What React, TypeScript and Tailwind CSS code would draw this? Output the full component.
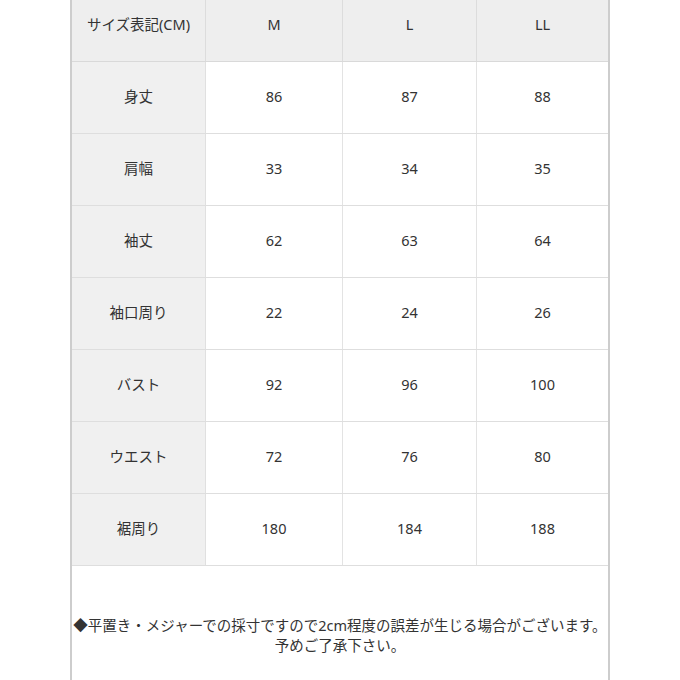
const rows = [
  { label: "身丈", values: ["86", "87", "88"] },
  { label: "肩幅", values: ["33", "34", "35"] },
  { label: "袖丈", values: ["62", "63", "64"] },
  { label: "袖口周り", values: ["22", "24", "26"] },
  { label: "バスト", values: ["92", "96", "100"] },
  { label: "ウエスト", values: ["72", "76", "80"] },
  { label: "裾周り", values: ["180", "184", "188"] },
];

const sizes = ["M", "L", "LL"];

const gridCols = "grid grid-cols-[134px_137px_134px_1fr]";

export default function App() {
  return (
    <main
      className="min-h-[680px] bg-white text-[#333333]"
      style={{ fontFamily: '"Noto Sans", "Noto Sans CJK JP", sans-serif' }}
    >
      <div className="mx-auto min-h-[680px] w-[540px] border-x-2 border-[#cdcdcd]">
        {/* header */}
        <div className={`${gridCols} h-[62px] border-b border-[#d9d9d9] bg-[#eeeeee] text-[14.5px]`}>
          <div className="flex items-center justify-center border-r border-[#dcdcdc] pb-[11px]">
            サイズ表記(CM)
          </div>
          {sizes.map((size, i) => (
            <div
              key={size}
              className={`flex items-center justify-center pb-[11px] ${i < 2 ? "border-r border-[#dcdcdc]" : ""}`}
            >
              {size}
            </div>
          ))}
        </div>

        {rows.map((row) => (
          <div key={row.label} className={`${gridCols} h-[72px] border-b border-[#dedede] text-[14.5px]`}>
            <div className="flex items-center justify-center border-r border-[#e0e0e0] bg-[#f0f0f0] pb-[1px]">
              {row.label}
            </div>
            {row.values.map((value, i) => (
              <div
                key={i}
                className={`flex items-center justify-center bg-white pb-[1px] ${i < 2 ? "border-r border-[#e3e3e3]" : ""}`}
              >
                {value}
              </div>
            ))}
          </div>
        ))}

        <div className="pt-[49px] text-center text-[14.5px] leading-5">
          <p>◆平置き・メジャーでの採寸ですので2cm程度の誤差が生じる場合がございます。</p>
          <p>予めご了承下さい。</p>
        </div>
      </div>
    </main>
  );
}
